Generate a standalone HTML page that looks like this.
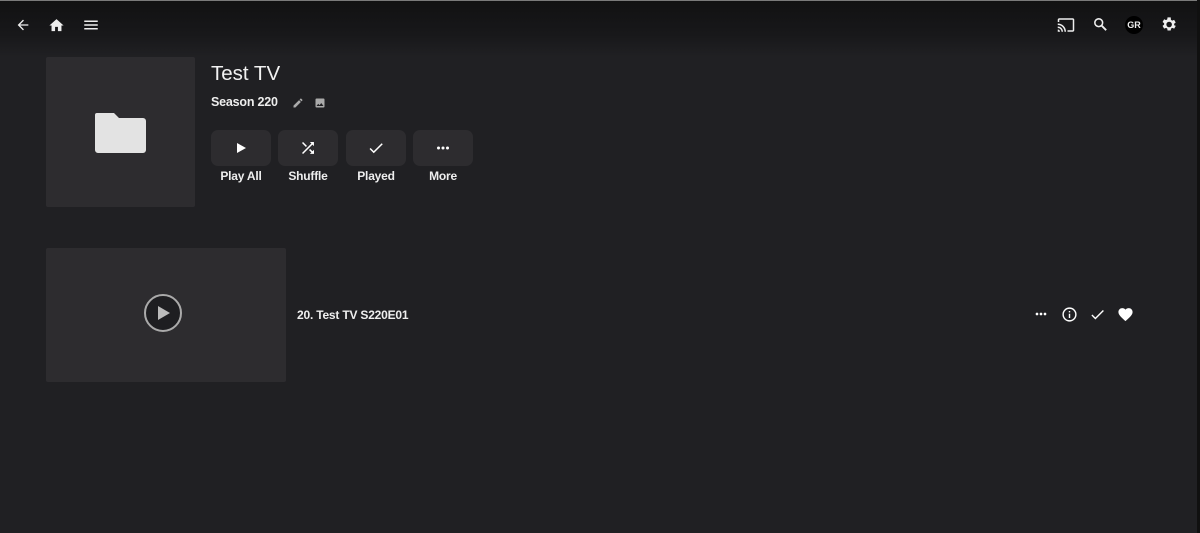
<!DOCTYPE html>
<html><head><meta charset="utf-8"><style>
*{margin:0;padding:0;box-sizing:border-box}
html,body{width:1200px;height:533px;overflow:hidden;background:#202023;font-family:"Liberation Sans",Arial,sans-serif;color:#eee}
.top{position:absolute;left:0;top:0;width:1200px;height:1px;background:#7a7a7a}
.hdr{position:absolute;left:0;top:1px;width:1200px;height:56px;background:linear-gradient(#111112 0%,#18181a 60%,#202023 100%)}
.rs{position:absolute;right:0;top:0;width:3px;height:533px;background:#101010}
svg{position:absolute}
.poster{position:absolute;left:46px;top:57px;width:149px;height:150px;background:#2d2c2f;border-radius:2px}
h1{position:absolute;left:211px;top:62px;font-size:20.5px;font-weight:normal;color:#f2f2f2}
.season{position:absolute;left:211px;top:95px;font-size:12.5px;font-weight:bold;letter-spacing:-0.2px}
.btn{position:absolute;top:130px;width:60px;height:36px;background:#2d2c2f;border-radius:7px}
.lbl{position:absolute;top:169px;width:60px;text-align:center;font-size:12px;font-weight:bold;letter-spacing:-0.2px}
.thumb{position:absolute;left:46px;top:248px;width:240px;height:134px;background:#2d2c2f;border-radius:2px}
.ep{position:absolute;left:297px;top:308px;font-size:12px;font-weight:bold;letter-spacing:-0.2px}
</style></head><body>
<div class="hdr"></div><div class="top"></div>
<svg style="left:15px;top:17px" width="16" height="16" viewBox="0 0 24 24"><path d="M20 11H7.8l5.6-5.6L12 4l-8 8 8 8 1.4-1.4L7.8 13H20z" fill="#eee"/></svg>
<svg style="left:48px;top:17px" width="17" height="17" viewBox="0 0 24 24"><path d="M10 20v-6h4v6h5v-8h3L12 3 2 12h3v8z" fill="#eee"/></svg>
<svg style="left:82px;top:16px" width="18" height="18" viewBox="0 0 24 24"><path d="M3 18h18v-2H3zm0-5h18v-2H3zm0-7v2h18V6z" fill="#eee"/></svg>
<svg style="left:1057px;top:16px" width="18" height="18" viewBox="0 0 24 24"><path d="M21 3H3c-1.1 0-2 .9-2 2v3h2V5h18v14h-7v2h7c1.1 0 2-.9 2-2V5c0-1.1-.9-2-2-2zM1 18v3h3c0-1.66-1.34-3-3-3zm0-4v2c2.76 0 5 2.24 5 5h2c0-3.87-3.13-7-7-7zm0-4v2c4.97 0 9 4.03 9 9h2c0-6.08-4.93-11-11-11z" fill="#eee"/></svg>
<svg style="left:1092px;top:16px" width="17" height="17" viewBox="0 0 24 24"><circle cx="9.5" cy="9.5" r="5.5" fill="none" stroke="#eee" stroke-width="2.2"/><path d="M13.5 13.5l6.5 6.5" stroke="#eee" stroke-width="2.6"/></svg>
<div style="position:absolute;left:1125px;top:16px;width:18px;height:18px;border-radius:50%;background:#000;color:#eee;font-size:9px;font-weight:bold;text-align:center;line-height:18px">GR</div>
<svg style="left:1159px;top:15px" width="19" height="19" viewBox="0 0 24 24"><path fill-rule="evenodd" d="M19.1 12.9a7 7 0 0 0 0-1.8l2-1.6-2-3.4-2.4 1a7 7 0 0 0-1.6-.9L14.8 3h-4l-.4 2.5a7 7 0 0 0-1.5.9l-2.4-1-2 3.4 2 1.6a7 7 0 0 0 0 1.8l-2 1.6 2 3.4 2.4-1a7 7 0 0 0 1.5.9l.4 2.5h4l.4-2.5a7 7 0 0 0 1.6-.9l2.4 1 2-3.4zM12.8 15.5a3.5 3.5 0 1 1 0-7 3.5 3.5 0 0 1 0 7z" fill="#eee"/></svg>

<div class="poster"></div>
<svg style="left:94px;top:110px" width="54" height="45" viewBox="0 0 54 45"><path d="M3 3h17l5 5h24a3 3 0 0 1 3 3v29a3 3 0 0 1-3 3H4a3 3 0 0 1-3-3V5a2 2 0 0 1 2-2z" fill="#e3e3e3"/></svg>
<h1>Test TV</h1>
<div class="season">Season 220</div>
<svg style="left:292px;top:97px" width="12" height="12" viewBox="0 0 24 24"><path d="M3 17.2V21h3.8L17.8 9.9l-3.7-3.7zM20.7 7a1 1 0 0 0 0-1.4l-2.3-2.3a1 1 0 0 0-1.4 0l-1.8 1.8 3.7 3.7z" fill="#aaa"/></svg>
<svg style="left:314px;top:97px" width="12" height="12" viewBox="0 0 24 24"><path d="M21 19V5a2 2 0 0 0-2-2H5a2 2 0 0 0-2 2v14a2 2 0 0 0 2 2h14a2 2 0 0 0 2-2zM8.5 13.5l2.5 3 3.5-4.5 4.5 6H5z" fill="#aaa"/></svg>

<div class="btn" style="left:211px"></div>
<div class="btn" style="left:278px"></div>
<div class="btn" style="left:346px"></div>
<div class="btn" style="left:413px"></div>
<svg style="left:235px;top:142px" width="12" height="12" viewBox="0 0 12 12"><path d="M2 1l9 5-9 5z" fill="#fff"/></svg>
<svg style="left:299px;top:139px" width="18" height="18" viewBox="0 0 24 24"><path d="M10.6 9.2L5.4 4 4 5.4l5.2 5.2zM14.5 4l2 2L4 18.6 5.4 20 17.9 7.5l2 2V4zm.3 9.4l-1.4 1.4 3.1 3.1-2 2H20v-5.5l-2 2z" fill="#fff"/></svg>
<svg style="left:367px;top:139px" width="18" height="18" viewBox="0 0 24 24"><path d="M9 16.2L4.8 12l-1.4 1.4L9 19 21 7l-1.4-1.4z" fill="#fff"/></svg>
<svg style="left:434px;top:139px" width="18" height="18" viewBox="0 0 24 24"><circle cx="6" cy="12" r="2" fill="#fff"/><circle cx="12" cy="12" r="2" fill="#fff"/><circle cx="18" cy="12" r="2" fill="#fff"/></svg>
<div class="lbl" style="left:211px">Play All</div>
<div class="lbl" style="left:278px">Shuffle</div>
<div class="lbl" style="left:346px">Played</div>
<div class="lbl" style="left:413px">More</div>

<div class="thumb"></div>
<div style="position:absolute;left:144px;top:294px;width:38px;height:38px;border-radius:50%;border:2px solid #aaa;background:#1e1e21"></div>
<svg style="left:157px;top:305px" width="14" height="16" viewBox="0 0 14 16"><path d="M1 1l12 7-12 7z" fill="#bbb"/></svg>
<div class="ep">20. Test TV S220E01</div>
<svg style="left:1033px;top:306px" width="16" height="16" viewBox="0 0 24 24"><circle cx="6" cy="12" r="2" fill="#fff"/><circle cx="12" cy="12" r="2" fill="#fff"/><circle cx="18" cy="12" r="2" fill="#fff"/></svg>
<svg style="left:1061px;top:306px" width="17" height="17" viewBox="0 0 24 24"><path d="M11 7h2v2h-2zm0 4h2v6h-2zm1-9a10 10 0 1 0 0 20 10 10 0 0 0 0-20zm0 18a8 8 0 1 1 0-16 8 8 0 0 1 0 16z" fill="#fff"/></svg>
<svg style="left:1089px;top:306px" width="17" height="17" viewBox="0 0 24 24"><path d="M9 16.2L4.8 12l-1.4 1.4L9 19 21 7l-1.4-1.4z" fill="#fff"/></svg>
<svg style="left:1117px;top:306px" width="17" height="17" viewBox="0 0 24 24"><path d="M12 21.4l-1.5-1.3C5.4 15.4 2 12.3 2 8.5 2 5.4 4.4 3 7.5 3c1.7 0 3.4.8 4.5 2.1C13.1 3.8 14.8 3 16.5 3 19.6 3 22 5.4 22 8.5c0 3.8-3.4 6.9-8.5 11.5z" fill="#fff"/></svg>
<div class="rs"></div>
</body></html>
